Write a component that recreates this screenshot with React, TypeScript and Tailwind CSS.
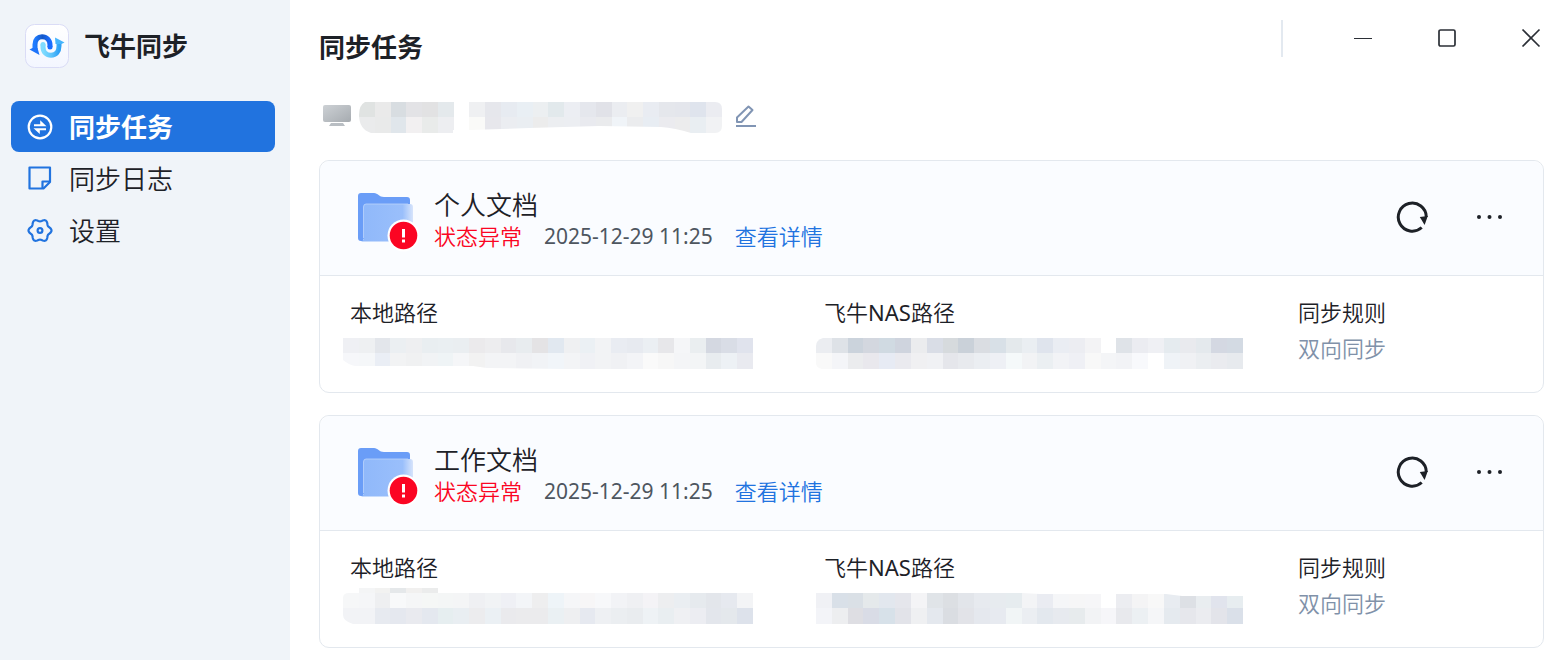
import React from "react";

interface MosaicProps {
  label: string;
  width: number;
  top?: number;
  rows: string[][];
  outline: string;
}

interface SyncTask {
  name: string;
  time: string;
  local: MosaicProps;
  nas: MosaicProps;
}

const hex = (list: string) => list.split(" ").map((c) => `#${c}`);

const deviceName: MosaicProps = {
  label: "设备名称",
  width: 363,
  rows: [
    hex("e0e3e2 eaeaea d8dde1 e3e3e6 e2e2e3 e4e9ec ffffff eff0f2 e6e7ec e7ebf1 e9eff4 eceff1 e2e9ec eceef3 e5e7ed e1e2e8 ebedf1 f0f0f0 e9ecf2 e5e7ec e4e6ec dfe4ed ebecf1"),
    hex("eaebec e9eaea e0e6eb f2f0f1 e9ebea edeef1 ffffff fafaf8 e7e7ec ebedf1 eaeef2 ececec eceef1 eceef2 e9eaef eaebed f0f4f8 ebecee e8edf3 ebebef ececed e9eef2 f1f2f4"),
  ],
  outline:
    "M6 0H356Q363 0 363 7V24Q363 31 356 31H332Q316 26 302 25L240 24 170 26 110 28H94V31H12Q0 27 0 13Q0 3 6 0Z",
};

const tasks: SyncTask[] = [
  {
    name: "个人文档",
    time: "2025-12-29 11:25",
    local: {
      label: "个人文档本地路径",
      width: 410,
      rows: [
        hex("eff0f4 eef0f2 e3e6eb ebeff2 eeeff1 e9eef1 eaeff2 eaeef1 ebeaec ededef e7e8ec e8ecef e4e3e5 e1e8f0 eff0f2 ebf0f4 f2f3f5 e9ecf2 e7eaf0 ebeff3 e7e7ea f5f6f8 eaeef0 d4d8e1 d9dde6 e0e3ed"),
        hex("f6f7fa f5f7f9 eaeef5 f2f3f4 f0f1f2 f1f3f5 eff4f6 f5f6f8 f2f2f2 f3f4f6 f3f4f6 f0f1f4 f1f3f6 f1f5f9 f3f4f6 f0f1f5 f2f3f5 f0f1f4 f3f4f7 fafafa f7f7f7 f4f5f7 f3f5f6 e8ecef edf1f5 e9eaf0"),
      ],
      outline: "M0 0H410V31H224L144 30 130 28H12Q6 27 0 22Z",
    },
    nas: {
      label: "个人文档飞牛NAS路径",
      width: 427,
      rows: [
        hex("ebedf1 dee2e7 cbd3dc d3d7df d0dae2 cfd4de ebecee d9dde6 d6dadd cad1d9 dadde2 d8e0e7 e4e9ec eaeef2 dfe4ed eaedf3 ecedf2 f3f3f5 ffffff dfe3e8 ebecf1 eff0f4 e5ebef e9eaee e4e9ed d4d8e2 d3dae3"),
        hex("f9f9f9 f4f5f8 ebecee e9e8ed e7ebf4 eaeaef f0f0f2 f0f1f4 e5e6eb e8eaee ebeef2 eef0f5 f5f9fa f2f3f5 ebeff2 f2f3f6 eff0f5 f8f8f8 f4f5f7 f2f3f6 f8f9fc ffffff eff3f7 f0f1f4 ebeef1 eaebef e7eaee"),
      ],
      outline: "M7 0H427V31H6Q0 30 0 25V8Q0 2 7 0Z",
    },
  },
  {
    name: "工作文档",
    time: "2025-12-29 11:25",
    local: {
      label: "工作文档本地路径",
      width: 410,
      top: 5,
      rows: [
        hex("ffffff f4f5f6 f2f2f1 e5e8ea f1f0ef ebecec ffffff ffffff ffffff ffffff ffffff ffffff ffffff ffffff ffffff ffffff ffffff ffffff ffffff ffffff ffffff ffffff ffffff ffffff ffffff ffffff"),
        hex("f6f7f8 f5f6f8 eeeff1 f8f9fa f5f6f7 f5f7f6 f4f6f6 f4f5f6 eff0f3 f1f3f5 eff0f5 f3f5f8 eeeeef eef4f8 f5f6f8 f7f6f7 f7f8fa f2f3f6 eff0f3 f4f3f6 edeef0 eaeef2 e6eaee e3e6eb e6e9ef f3f4f6"),
        hex("f2f3f6 f2f3f6 e7eaf0 e5e8ef e9eaef e4e8ef e6eef0 e9eef2 ececee ebf0f4 eaeaed ebebed ebebed eaf0f3 eeeff1 e6e9f0 eef0f3 ebeef1 e9ecef eef2f5 e9eef1 eff0f3 ecedf2 e3e6ec e4e8ec dde2eb"),
      ],
      outline: "M16 0H95V5H410V36H10Q0 33 0 27V10Q0 5 6 5H16Z",
    },
    nas: {
      label: "工作文档飞牛NAS路径",
      width: 427,
      rows: [
        hex("f0f1f5 d9e0e8 dae0e6 e5e9eb e2e7ee e5e6ec f4f4f6 e0e4e8 dcdfe3 e2e5ea e7eaef e7ebef e6ecef f3f4f6 eaecf2 f5f6f8 f6f6f7 f6f6f8 ffffff ecedf1 f4f4f5 f8f8f8 e8ecf1 dde0e5 e9edf0 e1e4ed e7edf0"),
        hex("f3f4f8 edeef0 dedee3 d9dce6 d7e1e9 e2e3e9 eff0f2 e4e8ee dadde2 e2e3e8 e5e8ee e7eaf0 f1f5f6 ebeef2 e3e8ee e7eaef e7ebed f2f3f5 f6f6f9 e8e9ed ecf0f3 f5f6f8 e5eaef e6e7ec ebecf0 e3e4ea dae0e9"),
      ],
      outline: "M0 0H206L224 1H350L366 3H427V31H0Z",
    },
  },
];

// Private text hidden behind coloured tiles
const Mosaic: React.FC<MosaicProps> = ({ label, width, top = 0, rows, outline }) => {
  const id = `mask-${label}`;
  const height = top + 31;
  const edges = top ? [0, top, top + 15, height] : [0, 15, height];
  const edge = (i: number, count: number) => Math.round((i * width) / count);

  return (
    <svg
      role="img"
      aria-label={label}
      width={width}
      height={height}
      viewBox={`0 0 ${width} ${height}`}
      shapeRendering="crispEdges"
      className="block shrink-0"
    >
      <clipPath id={id}>
        <path d={outline} />
      </clipPath>
      <g clipPath={`url(#${id})`}>
        {rows.map((row, r) =>
          row.map((fill, i) => (
            <rect
              key={`${r}-${i}`}
              x={edge(i, row.length)}
              y={edges[r]}
              width={edge(i + 1, row.length) - edge(i, row.length)}
              height={edges[r + 1] - edges[r]}
              fill={fill}
            />
          ))
        )}
      </g>
    </svg>
  );
};

const AppLogo = () => (
  <svg width="44" height="44" viewBox="0 0 44 44" aria-hidden="true">
    <defs>
      <linearGradient id="logo-bg" x1="0" y1="0" x2="0" y2="1">
        <stop offset="0" stopColor="#ffffff" />
        <stop offset="1" stopColor="#f3f6ff" />
      </linearGradient>
      <linearGradient id="logo-dark" x1="0" y1="0" x2="1" y2="0">
        <stop offset="0" stopColor="#1f7bff" />
        <stop offset="0.5" stopColor="#1256c8" />
        <stop offset="1" stopColor="#1a6dff" />
      </linearGradient>
      <linearGradient id="logo-light" x1="0" y1="0" x2="1" y2="0">
        <stop offset="0" stopColor="#7fdcff" />
        <stop offset="0.55" stopColor="#5cc3fb" />
        <stop offset="1" stopColor="#2ea0f5" />
      </linearGradient>
    </defs>
    <rect x="0.5" y="0.5" width="43" height="43" rx="9" fill="url(#logo-bg)" stroke="#dadcf6" />
    <path d="M18 20.500V23C18 28 21.500 31.300 26 31.300C31 31.300 34 27.500 34 22V18.500" fill="none" stroke="url(#logo-light)" strokeWidth="5" strokeLinejoin="round" />
    <circle cx="18" cy="20.500" r="2.500" fill="#7fdcff" />
    <path d="M30 13.500L39.500 18.500L36.500 20H30.500Z" fill="#45b4fc" />
    <path d="M10 25V20.500C10 15.500 13 12.700 17 12.700C21.500 12.700 25 16 25 21V23" fill="none" stroke="url(#logo-dark)" strokeWidth="5" />
    <circle cx="25" cy="23" r="2.500" fill="#1a6dff" />
    <path d="M4.500 25.500L7.500 24H12.500L14.500 31Z" fill="#1e74fb" />
  </svg>
);

const TaskIcon = () => (
  <svg width="26" height="26" viewBox="0 0 26 26" aria-hidden="true">
    <circle cx="13" cy="13" r="11.300" fill="none" stroke="currentColor" strokeWidth="2.200" />
    <path d="M7 10.200H13.200V6.300L19.500 12.200H7Z" fill="currentColor" />
    <path d="M19 16.200H12.800V20L6.500 14.200H19Z" fill="currentColor" />
  </svg>
);

const LogIcon = () => (
  <svg width="26" height="26" viewBox="0 0 26 26" fill="none" stroke="currentColor" strokeWidth="2.200" strokeLinejoin="round" aria-hidden="true">
    <path d="M2.500 1.500H23V16L16.500 22.500H2.500Z" />
    <path d="M15.500 22.500V15.500H23" />
  </svg>
);

// Gear outline with six soft teeth
const gearPoints = Array.from({ length: 72 }, (_, i) => {
  const angle = (i * Math.PI) / 36;
  const r = 10.3 + 1.2 * Math.cos(6 * angle);
  return `${(13 + r * Math.cos(angle)).toFixed(2)},${(12.5 + r * Math.sin(angle)).toFixed(2)}`;
}).join(" ");

const SettingsIcon = () => (
  <svg width="26" height="26" viewBox="0 0 26 26" fill="none" stroke="currentColor" strokeWidth="2.200" strokeLinejoin="round" aria-hidden="true">
    <polygon points={gearPoints} />
    <circle cx="13" cy="12.500" r="2.400" />
  </svg>
);

const MonitorIcon = () => (
  <svg width="30" height="24" viewBox="0 0 30 24" aria-hidden="true">
    <defs>
      <linearGradient id="monitor" x1="0" y1="0" x2="1" y2="1">
        <stop offset="0" stopColor="#cdd1d5" />
        <stop offset="1" stopColor="#a6abb0" />
      </linearGradient>
    </defs>
    <rect x="1" y="1" width="28" height="17" rx="2" fill="url(#monitor)" />
    <path d="M9 19H21L23 22H7Z" fill="#b9bec3" />
  </svg>
);

const EditIcon = () => (
  <svg width="22" height="24" viewBox="0 0 22 24" fill="none" stroke="currentColor" strokeWidth="2" strokeLinejoin="round" aria-hidden="true">
    <path d="M2 17V12.500L13.500 1.500L17.500 5L6.500 17Z" />
    <path d="M1 21H21" />
  </svg>
);

const FolderIcon = () => (
  <svg width="62" height="60" viewBox="0 0 62 60" aria-hidden="true">
    <defs>
      <linearGradient id="folder-front" x1="0" y1="0" x2="1" y2="0">
        <stop offset="0" stopColor="#8fb8fa" />
        <stop offset="0.800" stopColor="#9abffb" />
        <stop offset="1" stopColor="#d7e4fb" />
      </linearGradient>
    </defs>
    <path d="M3 1H16C20 1 21 5 26 5H49Q52 5 52 8V47H5V49H3Q0 49 0 46V4Q0 1 3 1Z" fill="#6a9df7" />
    <path d="M8 12H52Q55 12 55 15V49.500H3Q5.500 49 5.500 46V15Q5.500 12 8 12Z" fill="url(#folder-front)" />
    <path d="M5.500 46V15Q5.500 12 8 12H50" fill="none" stroke="#bcd4fb" strokeWidth="0.800" />
    <circle cx="45.500" cy="43.500" r="16" fill="#ffffff" />
    <circle cx="45.500" cy="43.500" r="13.800" fill="#fb0523" />
    <path d="M44 37H47V45.500H44Z" fill="#ffffff" />
    <path d="M44 47.500H47V50.500H44Z" fill="#ffffff" />
  </svg>
);

const RefreshIcon = () => (
  <svg width="32" height="32" viewBox="0 0 32 32" fill="none" aria-hidden="true">
    <path d="M25.700 26.500A14 14 0 1 1 30.300 16" stroke="currentColor" strokeWidth="3" />
    <path d="M23.800 16L31.800 15L28.600 24Z" fill="currentColor" />
  </svg>
);

const MoreIcon = () => (
  <svg width="32" height="32" viewBox="0 0 32 32" fill="currentColor" aria-hidden="true">
    <circle cx="5" cy="16" r="2" />
    <circle cx="15.500" cy="16" r="2" />
    <circle cx="26" cy="16" r="2" />
  </svg>
);

const navItems = [
  { label: "同步任务", Icon: TaskIcon, active: true },
  { label: "同步日志", Icon: LogIcon, active: false },
  { label: "设置", Icon: SettingsIcon, active: false },
];

const windowControls = [
  { label: "最小化", shape: <path d="M1 10.500H19" strokeWidth="1" /> },
  { label: "最大化", shape: <rect x="2" y="2" width="16" height="16" rx="1.500" /> },
  { label: "关闭", shape: <path d="M1.500 1.500L18.500 18.500M18.500 1.500L1.500 18.500" /> },
];

const Sidebar = () => (
  <aside className="w-[290px] shrink-0 bg-[#f0f4f9] pt-6">
    <div className="flex h-11 items-center gap-[15px] pl-[25px]">
      <AppLogo />
      <span className="text-[26px] font-bold leading-8">飞牛同步</span>
    </div>
    <nav className="mt-[33px] flex flex-col gap-px pl-[11px] pr-[15px]">
      {navItems.map(({ label, Icon, active }) => (
        <button
          key={label}
          className={
            active
              ? "flex h-[51px] items-center gap-4 rounded-lg bg-[#2173df] pl-4 text-white"
              : "flex h-[51px] items-center gap-4 rounded-lg pl-4 text-[#2173df]"
          }
        >
          <Icon />
          <span
            className={
              active
                ? "text-[26px] font-bold leading-8"
                : "text-[26px] font-[350] leading-8 text-[#1d2127]"
            }
          >
            {label}
          </span>
        </button>
      ))}
    </nav>
  </aside>
);

const TaskCard: React.FC<{ task: SyncTask }> = ({ task }) => (
  <article className="rounded-[10px] border border-[#e3e8ee]">
    <div className="flex h-[115px] rounded-t-[10px] border-b border-[#e3e8ee] bg-[#fafcff] pl-[38px] pr-[37px] pt-7">
      <div className="pt-[3px]">
        <FolderIcon />
      </div>
      <div className="ml-3.5 flex-1">
        <h2 className="text-[26px] font-[350] leading-8">{task.name}</h2>
        <div className="flex items-center gap-[22px] text-[22px] font-[350] leading-[30px]">
          <span className="text-[#fb0523]">状态异常</span>
          <time className="text-[21px] font-normal text-[#4e565f]">{task.time}</time>
          <a href="#detail" className="text-[#2173df]">
            查看详情
          </a>
        </div>
      </div>
      <div className="flex h-14 items-center gap-[46px]">
        <button aria-label="重新同步">
          <RefreshIcon />
        </button>
        <button aria-label="更多">
          <MoreIcon />
        </button>
      </div>
    </div>
    <dl className="grid h-[116px] grid-cols-[2fr_2fr_1fr] pl-[30px] pr-2 pt-5 text-[22px] font-[350] leading-8">
      <div className="flex flex-col">
        <dt>本地路径</dt>
        <dd className="-ml-[7px] flex h-[41px] items-end">
          <Mosaic {...task.local} />
        </dd>
      </div>
      <div className="flex flex-col">
        <dt>
          飞牛<span className="font-normal">NAS</span>路径
        </dt>
        <dd className="-ml-2 flex h-[41px] items-end">
          <Mosaic {...task.nas} />
        </dd>
      </div>
      <div className="flex flex-col gap-1">
        <dt>同步规则</dt>
        <dd className="text-[#8091a9]">双向同步</dd>
      </div>
    </dl>
  </article>
);

const App = () => {
  return (
    <div className="flex min-h-screen bg-white font-['Noto_Sans','Noto_Sans_CJK_SC',sans-serif] text-[#1d2127]">
      <Sidebar />
      <main className="min-w-0 flex-1 pb-3 pl-[29px] pr-[14px]">
        <header className="flex h-[102px] items-start justify-between pt-5">
          <h1 className="text-[26px] font-bold leading-[54px]">同步任务</h1>
          <div className="-mr-2 flex items-start">
            <span className="mr-[59px] h-[37px] w-0.5 bg-[#e3e9f0]" />
            <div className="flex gap-[42px]">
              {windowControls.map(({ label, shape }) => (
                <button key={label} aria-label={label} className="flex h-9 w-[42px] items-center justify-center">
                  <svg width="20" height="20" viewBox="0 0 20 20" fill="none" stroke="#2b2f36" strokeWidth="1.700" aria-hidden="true">
                    {shape}
                  </svg>
                </button>
              ))}
            </div>
          </div>
        </header>
        <div className="flex h-[31px] items-start pl-[3px]">
          <div className="pt-0.5">
            <MonitorIcon />
          </div>
          <div className="ml-[7px] mr-[13px]">
            <Mosaic {...deviceName} />
          </div>
          <button aria-label="编辑设备名称" className="pt-[3px] text-[#8195b4]">
            <EditIcon />
          </button>
        </div>
        <section className="mt-[27px] flex flex-col gap-[22px]">
          {tasks.map((task) => (
            <TaskCard key={task.name} task={task} />
          ))}
        </section>
      </main>
    </div>
  );
};

export default App;
